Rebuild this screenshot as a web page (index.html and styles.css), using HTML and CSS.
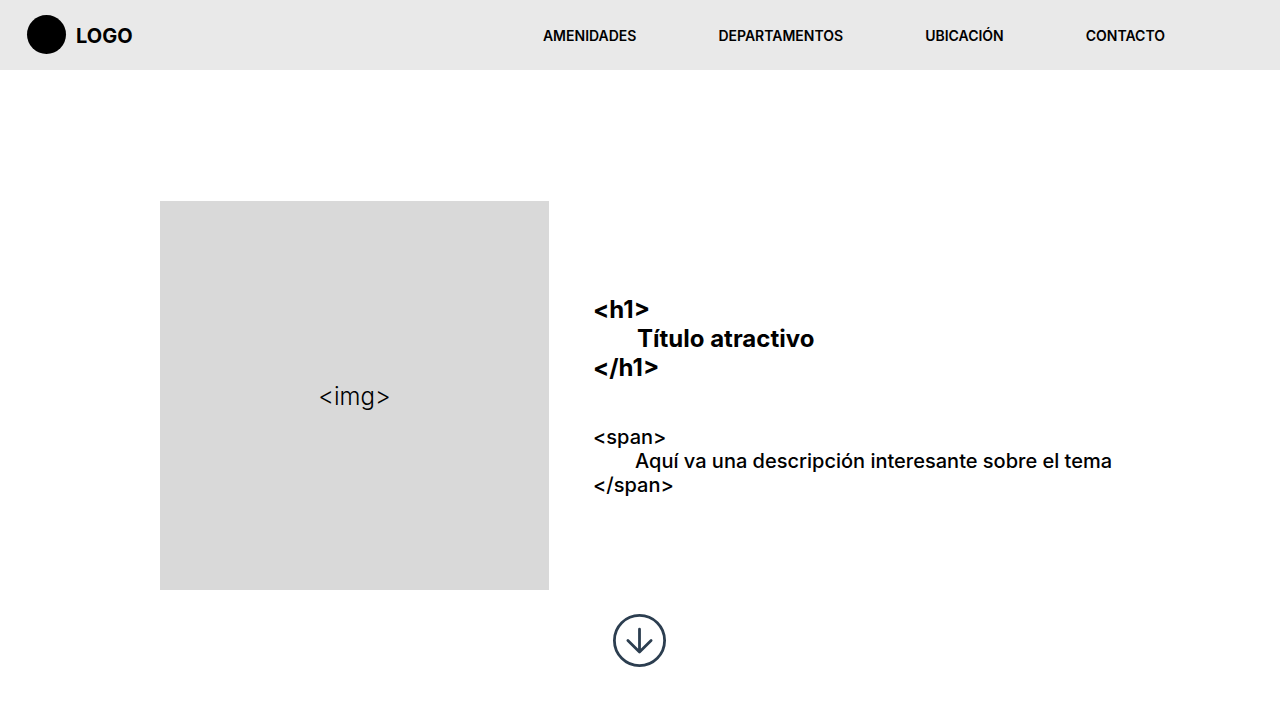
FILE: index.html
```html
<!DOCTYPE html>
<html lang="es">
<head>
<meta charset="utf-8">
<meta name="viewport" content="width=device-width, initial-scale=1">
<title>Logo</title>
<link rel="stylesheet" href="styles.css">
</head>
<body>
<header class="header">
  <a class="brand" href="#"><span class="brand-mark"></span><span class="brand-name">LOGO</span></a>
  <nav class="nav">
    <a href="#amenidades">AMENIDADES</a>
    <a href="#departamentos">DEPARTAMENTOS</a>
    <a href="#ubicacion">UBICACIÓN</a>
    <a href="#contacto">CONTACTO</a>
  </nav>
</header>
<main class="main">
  <section class="hero">
    <div class="picture">&lt;img&gt;</div>
    <div class="copy">
      <h1 class="title">&lt;h1&gt;<span class="title-text">Título atractivo</span>&lt;/h1&gt;</h1>
      <p class="description">&lt;span&gt;<span class="description-text">Aquí va una descripción interesante sobre el tema</span>&lt;/span&gt;</p>
    </div>
  </section>
  <a class="scroll" href="#amenidades" aria-label="Bajar">
    <svg class="scroll-icon" viewBox="0 0 54 54" fill="none" stroke="#2c3e50" stroke-width="2.8" stroke-linecap="round" stroke-linejoin="round">
      <circle cx="26.5" cy="26.5" r="25.1"/>
      <path d="M26.5 15.2V38M14.9 26.5L26.5 38L38.1 26.5"/>
    </svg>
  </a>
</main>
</body>
</html>
```
FILE: styles.css
```css
* {
  box-sizing: border-box;
}

body {
  margin: 0;
  background: #fff;
  color: #000;
  font-family: Inter, "Liberation Sans", sans-serif;
}

a {
  color: inherit;
  text-decoration: none;
}

.header {
  display: flex;
  align-items: center;
  justify-content: space-between;
  padding: 15px 115px 16px 27px;
  background: #e9e9e9;
}

.brand {
  display: flex;
  align-items: center;
  gap: 10px;
  font-size: 20px;
  line-height: 24px;
  font-weight: 700;
}

.brand-mark {
  width: 39px;
  height: 39px;
  border-radius: 50%;
  background: #000;
}

.brand-name {
  padding-top: 2px;
}

.nav {
  display: flex;
  gap: 82px;
  padding-top: 2px;
  font-size: 14px;
  line-height: 17px;
  font-weight: 600;
}

.main {
  display: flex;
  flex-direction: column;
  align-items: center;
  gap: 24px;
  padding: 131px 160px 52px;
}

.hero {
  display: flex;
  align-items: center;
  gap: 44px;
  width: 100%;
}

.picture {
  display: flex;
  flex: 0 0 389px;
  align-items: center;
  justify-content: center;
  aspect-ratio: 1;
  padding-top: 2px;
  background: #d9d9d9;
  font-size: 24px;
  line-height: 29px;
  font-weight: 300;
}

.copy {
  flex: 1;
}

.title {
  margin: 0 0 43px;
  font-size: 24px;
  line-height: 29px;
  font-weight: 700;
}

.title-text {
  display: block;
  padding-left: 44px;
}

.description {
  margin: 0;
  font-size: 20px;
  line-height: 24px;
  font-weight: 500;
}

.description-text {
  display: block;
  padding-left: 42px;
  white-space: nowrap;
}

.scroll,
.scroll-icon {
  display: block;
  width: 54px;
  height: 54px;
}
```
